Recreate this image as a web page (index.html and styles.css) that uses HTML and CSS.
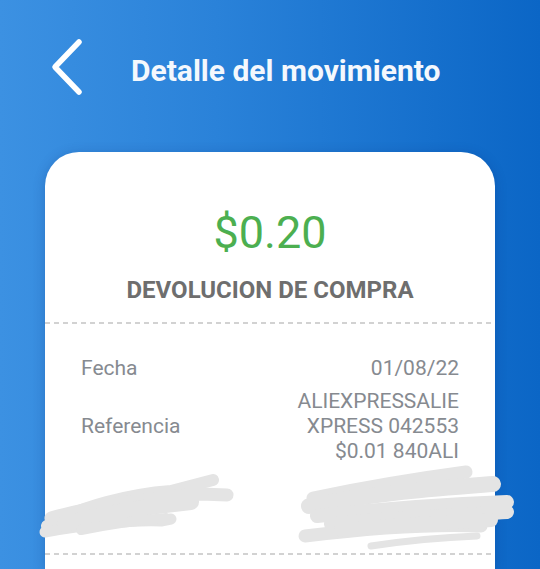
FILE: index.html
```html
<!DOCTYPE html>
<html>
<head>
  <meta charset="UTF-8">
  <title>Detalle del movimiento</title>
  <link rel="stylesheet" href="styles.css">
</head>
<body>
  <div class="screen">
    <header class="topbar">
      <button class="back-btn" aria-label="Volver">
        <svg width="36" height="60" viewBox="0 0 36 60">
          <polyline points="30,4 6,29 30,54" fill="none" stroke="#fff" stroke-width="5.5" stroke-linecap="round" stroke-linejoin="round"/>
        </svg>
      </button>
      <h1 class="title">Detalle del movimiento</h1>
    </header>

    <div class="card">
      <div class="summary">
        <div class="amount">$0.20</div>
        <div class="concept">DEVOLUCION DE COMPRA</div>
      </div>

      <div class="divider"></div>

      <div class="details">
        <div class="row">
          <span class="label">Fecha</span>
          <span class="value">01/08/22</span>
        </div>
        <div class="row">
          <span class="label">Referencia</span>
          <span class="value">ALIEXPRESSALIE<br>XPRESS 042553<br>$0.01 840ALI</span>
        </div>
        <div class="row redacted">
          <!-- tachado a mano sobre los datos ocultos -->
          <svg class="scribble" width="480" height="90" viewBox="0 0 480 90">
            <g fill="none" stroke="#e4e4e4" stroke-linecap="round" stroke-linejoin="round">
              <path d="M6 62 C40 42 90 30 130 27 L172 16" stroke-width="12"/>
              <path d="M10 54 C60 40 110 34 160 30 L186 31" stroke-width="13"/>
              <path d="M4 68 C50 60 90 56 120 57 L130 55" stroke-width="11"/>
              <path d="M24 60 C70 48 110 42 150 38" stroke-width="16"/>
              <path d="M40 66 C70 60 100 56 125 54" stroke-width="10"/>
              <path d="M272 34 C330 22 380 14 425 8" stroke-width="13"/>
              <path d="M268 42 C340 28 400 24 452 20" stroke-width="16"/>
              <path d="M276 52 C350 44 410 40 466 38" stroke-width="14"/>
              <path d="M290 60 C350 54 410 52 466 48" stroke-width="14"/>
              <path d="M264 72 C330 64 390 60 440 62" stroke-width="13"/>
              <path d="M300 66 C360 60 410 58 450 56" stroke-width="14"/>
              <path d="M330 82 C370 76 410 73 436 72" stroke-width="7"/>
            </g>
          </svg>
        </div>
      </div>

      <div class="divider"></div>
    </div>
  </div>
</body>
</html>
```

FILE: styles.css
```css
html, body {
  margin: 0;
  padding: 0;
}

body {
  width: 540px;
  height: 569px;
  overflow: hidden;
  font-family: Roboto, "Liberation Sans", sans-serif;
  background: linear-gradient(90deg, #3c91e2 0%, #2a82d9 40%, #0b66c6 100%);
}

.screen {
  height: 569px;
  display: flex;
  flex-direction: column;
}

.topbar {
  display: flex;
  align-items: center;
  height: 52px;
  padding: 42px 0 0 49px;
  gap: 46px;
}

.back-btn {
  padding: 0;
  border: none;
  background: none;
  display: flex;
}

.title {
  margin: 0;
  padding-top: 4px;
  font-size: 30px;
  font-weight: 700;
  color: #f4f8fd;
}

.card {
  flex: 1;
  margin: 58px 45px 0;
  background: #fff;
  border-radius: 34px 34px 0 0;
  box-shadow: 0 2px 12px rgba(0, 40, 110, 0.25);
}

.summary {
  padding: 55px 0 17px;
  text-align: center;
}

.amount {
  font-size: 45px;
  line-height: 52px;
  color: #4caf50;
}

.concept {
  margin-top: 16px;
  font-size: 24px;
  line-height: 30px;
  font-weight: 700;
  color: #6e6e6e;
}

.divider {
  height: 2px;
  margin-right: 4px;
  background: repeating-linear-gradient(90deg, #d2d2d2 0 5px, transparent 5px 9px);
}

.details {
  padding: 32px 36px 0;
  display: flex;
  flex-direction: column;
  gap: 8px;
}

.row {
  display: flex;
  justify-content: space-between;
  align-items: center;
  font-size: 21px;
  line-height: 25px;
}

.label {
  color: #868a90;
}

.value {
  color: #868a90;
  text-align: right;
}

.redacted {
  position: relative;
  height: 89px;
  margin-top: -8px;
}

.scribble {
  position: absolute;
  left: -40px;
  top: 0;
  overflow: visible;
}
```
